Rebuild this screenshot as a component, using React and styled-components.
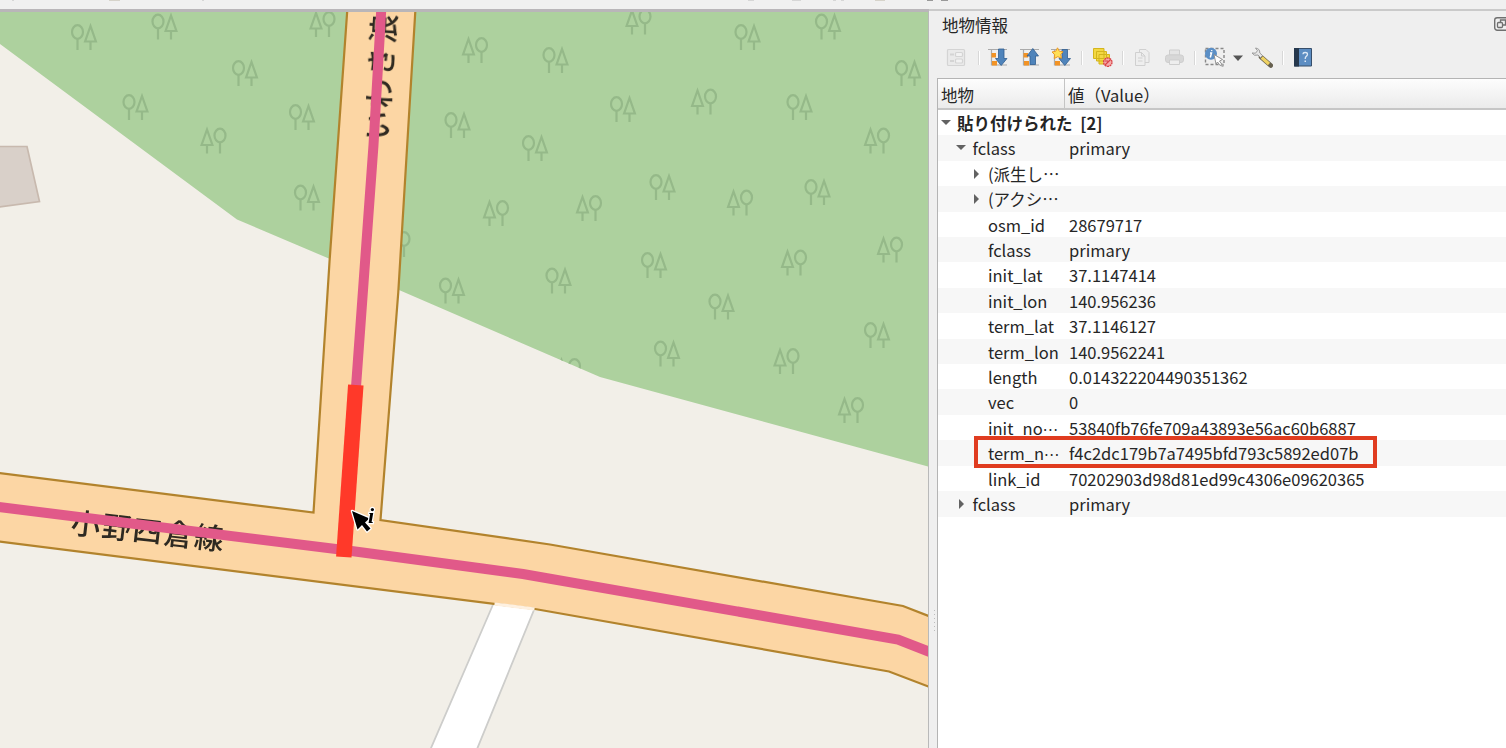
import React from "react";
import styled, { createGlobalStyle } from "styled-components";

const GlobalStyle = createGlobalStyle`
  *, *::before, *::after { box-sizing: border-box; }
  body {
    margin: 0;
    background: #efefef;
    font-family: "Noto Sans CJK JP", "Noto Sans", sans-serif;
    font-size: 16.5px;
    color: #262626;
    overflow: hidden;
  }
`;

const Window = styled.div`
  display: flex;
  flex-direction: column;
  width: 1506px;
  height: 748px;
  overflow: hidden;
`;

const TopStrip = styled.header`
  height: 9px;
  flex: none;
  background: #f0f0f0;
  svg { display: block; }
`;

const Workspace = styled.main`
  flex: 1;
  display: flex;
  min-height: 0;
`;

const MapView = styled.section`
  width: 929px;
  flex: none;
  border-top: 3px solid #b9b6b9;
  border-right: 1px solid #b9b9b9;
  background: #f2efe9;
  svg { display: block; }
`;

const Splitter = styled.div`
  width: 8px;
  flex: none;
  display: flex;
  flex-direction: column;
  align-items: center;
  gap: 3px;
  padding: 599px 0 0 2px;
  border-top: 2px solid #cacaca;
  background: #efefef;
`;

const Grip = styled.i`
  width: 1px;
  height: 1px;
  background: #bdbdbd;
`;

const Panel = styled.aside`
  flex: 1;
  min-width: 0;
  display: flex;
  flex-direction: column;
  border-top: 2px solid #cacaca;
  background: #efefef;
`;

const TitleBar = styled.div`
  height: 30px;
  display: flex;
  justify-content: space-between;
  padding: 0 0 0 5px;
  line-height: 29px;
  overflow: hidden;
`;

const FloatButton = styled.span`
  width: 12px;
  height: 22px;
  margin-top: 4px;
  overflow: hidden;
  svg { display: block; }
`;

const ToolBar = styled.div`
  height: 37px;
  display: flex;
  align-items: flex-start;
  padding: 6px 0 0 9px;
`;

const Tool = styled.span`
  width: 22px;
  height: 22px;
  flex: none;
  margin-left: ${(p) => p.$gap || 0}px;
  opacity: ${(p) => (p.$disabled ? 0.6 : 1)};
  svg { display: block; }
`;

const Divider = styled.i`
  width: 2px;
  height: 14px;
  margin: 4px 0 0 ${(p) => p.$gap}px;
  border-left: 1px solid #d8d8d8;
  border-right: 1px solid #fff;
`;

const Tree = styled.div`
  flex: 1;
  background: #fff;
  border-left: 1px solid #b4b4b4;
`;

const TreeHeader = styled.div`
  display: flex;
  height: 32px;
  border-top: 1px solid #b4b4b4;
  border-bottom: 2px solid #c6c6c6;
  background: linear-gradient(#fdfdfd, #ebebeb);
  line-height: 33px;
  overflow: hidden;
`;

const HeaderCell = styled.div`
  width: ${(p) => p.$width};
  padding-left: 3px;
  border-right: ${(p) => (p.$last ? "none" : "1px solid #c4c4c4")};
  white-space: nowrap;
`;

const Row = styled.div`
  position: relative;
  z-index: ${(p) => (p.$raised ? 1 : 0)};
  display: flex;
  height: 25.42px;
  line-height: 27px;
  background: ${(p) => (p.$odd ? "#f7f7f7" : "#fff")};
  font-weight: ${(p) => (p.$bold ? 700 : 400)};
  word-spacing: ${(p) => (p.$bold ? 4 : 0)}px;
  white-space: nowrap;
`;

const Name = styled.div`
  width: ${(p) => (p.$wide ? "auto" : "127px")};
  flex: none;
  display: flex;
  padding-left: ${(p) => 2 + p.$level * 15.5}px;
`;

const Ellipsis = styled.span`
  font-size: 14px;
  line-height: 0;
  vertical-align: 4.5px;
`;

const Arrow = styled.span`
  width: 17px;
  flex: none;
  display: flex;
  padding-top: ${(p) => (p.$open ? 9 : 7)}px;
  margin-left: ${(p) => (p.$nested ? -1 : 0)}px;
  margin-right: ${(p) => (p.$nested ? 1 : 0)}px;
  svg { display: block; }
`;

const Value = styled.div`
  padding-left: 4px;
`;

const Highlight = styled.span`
  position: absolute;
  left: 36px;
  top: -4px;
  width: 403px;
  height: 32px;
  border: 4px solid #e03c20;
`;

const rows = [
  { name: "貼り付けられた [2]", level: 0, state: "open", bold: true },
  { name: "fclass", value: "primary", level: 1, state: "open" },
  { name: "(派生し…", level: 2, state: "closed" },
  { name: "(アクシ…", level: 2, state: "closed" },
  { name: "osm_id", value: "28679717", level: 2 },
  { name: "fclass", value: "primary", level: 2 },
  { name: "init_lat", value: "37.1147414", level: 2 },
  { name: "init_lon", value: "140.956236", level: 2 },
  { name: "term_lat", value: "37.1146127", level: 2 },
  { name: "term_lon", value: "140.9562241", level: 2 },
  { name: "length", value: "0.014322204490351362", level: 2 },
  { name: "vec", value: "0", level: 2 },
  { name: "init_no", clipped: true, value: "53840fb76fe709a43893e56ac60b6887", level: 2 },
  { name: "term_n", clipped: true, value: "f4c2dc179b7a7495bfd793c5892ed07b", level: 2, marked: true },
  { name: "link_id", value: "70202903d98d81ed99c4306e09620365", level: 2 },
  { name: "fclass", value: "primary", level: 1, state: "closed" },
];

const roundFirst = [
  [84, 37], [164.5, 26.5], [245, 73], [135.5, 107], [302, 117], [307, 197.5],
  [457.5, 125], [555.5, 60], [535, 148], [623, 109], [662.5, 187], [452, 290.5],
  [558.5, 280.5], [654, 265], [721.5, 306.5], [747.5, 37], [828, 26.5],
  [908, 73], [799.5, 107], [817.5, 192], [667, 353.5], [877, 335],
];

const coneFirst = [
  [322.5, 24], [213.5, 140.5], [475, 50], [638.5, 21.5], [704, 101.5],
  [496, 213], [589, 208], [740, 202.5], [877, 140.5], [890, 249.5],
  [794, 262.5], [786.5, 361], [851, 410], [397.5, 244], [568, 371],
];

function TreePair({ x, y, flip }) {
  const round = flip ? 6.5 : -6.5;
  return (
    <g transform={`translate(${x} ${y})`}>
      <g transform={`translate(${round} 0)`}>
        <ellipse cy="-5" rx="5.5" ry="6.8" />
        <path d="M0 2V13" />
      </g>
      <path transform={`translate(${-round} 0)`} d="M0-11L-5.4 4.5H5.4ZM0 4.5V13" />
    </g>
  );
}

function MapCanvas() {
  const mainRoad = "M-5 472.5L313.500 512.500L329.500 262L348 0H416L398.300 292L380.500 520L550 544.500L903 606L935 618.500V689L889 671.500L535 609L-5 541Z";
  return (
    <svg width="928" height="736" viewBox="0 12 928 736">
      <defs>
        <clipPath id="wood">
          <path d="M0 0H928V466.500L600 377L399 290L330 259L237 219.500L0 44Z" />
        </clipPath>
        <filter id="labelSoft"><feGaussianBlur stdDeviation="0.6" /></filter>
      </defs>
      <rect y="12" width="928" height="736" fill="#f2efe8" />
      <g clipPath="url(#wood)">
        <rect width="928" height="480" fill="#add19e" />
        <g fill="none" stroke="#95b989" strokeWidth="2.200">
          {roundFirst.map(([x, y]) => <TreePair key={`${x}-${y}`} x={x} y={y} />)}
          {coneFirst.map(([x, y]) => <TreePair key={`${x}-${y}`} x={x} y={y} flip />)}
        </g>
      </g>
      <path d="M-5 146.500H27L39.500 201.500L-5 207.500Z" fill="#d9d0c9" stroke="#c8b9ae" strokeWidth="1.700" />
      <path d="M495 600L428 755H474.600L536 605Z" fill="#fff" stroke="#cdcdcb" strokeWidth="1.800" />
      <path d={mainRoad} fill="#fcd6a4" stroke="#b2832c" strokeWidth="2.200" strokeLinejoin="miter" />
      <path d="M494.500 604L534.500 609" stroke="#fef1e1" strokeWidth="3.200" />
      <g fill="#2e2920" fontFamily='"Noto Sans CJK JP", sans-serif' fontWeight="500" filter="url(#labelSoft)">
        <text transform="translate(70 533) rotate(6.500)" fontSize="29.500" letterSpacing="1.500">小野四倉線</text>
        <text transform="translate(387.500 141) rotate(-86.500)" fontSize="29.500" letterSpacing="2.800">いわき浪</text>
      </g>
      <path d="M381.800 0L373.500 145L356 387" fill="none" stroke="#e15989" strokeWidth="10" />
      <path d="M-5 506.500L344 550L523 574L898 639.500L935 654" fill="none" stroke="#e15989" strokeWidth="10" />
      <path d="M355.800 385L343.800 557" stroke="#ff3929" strokeWidth="15.500" />
      <path d="M352 511L357.500 529.500L362 525L367 531.500L370.500 528.500L365 522.500L369.500 518.500Z" fill="#000" stroke="#fff" strokeWidth="2.600" strokeLinejoin="round" paintOrder="stroke" />
      <text x="368" y="523" fontFamily='"Liberation Serif", serif' fontSize="22" fontWeight="700" fontStyle="italic" fill="#000" stroke="#fff" strokeWidth="2.400" paintOrder="stroke">i</text>
    </svg>
  );
}

const TreeLines = () => (
  <path d="M1 2.500H20M4.500 2V18.500M4.500 8H8M4.500 18H20" fill="none" stroke="#aaa" strokeWidth="1.200" />
);

const icons = {
  form: (
    <g fill="none" stroke="#c3c3c3" strokeWidth="1.200">
      <rect x="1.500" y="2.500" width="17" height="16" rx="1" fill="#e8e8e8" />
      <path d="M4 7.500H8M4 14H8" strokeWidth="2" />
      <rect x="9.500" y="5.500" width="7" height="4" rx="1" fill="#f5f5f5" />
      <rect x="9.500" y="12" width="7" height="4" rx="1" fill="#f5f5f5" />
    </g>
  ),
  expand: (
    <>
      <TreeLines />
      <path d="M4.500 6H9V10.500H4.500ZM5 14H10V18.500H5Z" fill="#f29325" />
      <path d="M11.500 2H17V11.500H20L14.200 18.500L8.500 11.500H11.500Z" fill="#4f84bb" stroke="#315e91" strokeWidth=".8" />
    </>
  ),
  collapse: (
    <>
      <TreeLines />
      <path d="M4.500 6H9V10.500H4.500ZM5 14H10V18.500H5Z" fill="#f29325" />
      <path d="M11 17.500H16.500V9H19.500L13.800 1.500L8 9H11Z" fill="#4f84bb" stroke="#315e91" strokeWidth=".8" />
    </>
  ),
  expandNew: (
    <>
      <TreeLines />
      <path d="M5 14H10V18.500H5Z" fill="#f29325" />
      <path d="M12 2.500H17.500V11.500H20.500L14.800 18.500L9 11.500H12Z" fill="#4f84bb" stroke="#315e91" strokeWidth=".8" />
      <path d="M7.500 .8L9.300 4.200L13 4.800L10.700 7.500L11.500 11.300L7.800 9.700L4.200 11.500L4.700 7.700L2 5L5.700 4.300Z" fill="#ffdf57" stroke="#e99725" />
    </>
  ),
  clear: (
    <>
      <path d="M1.500 1.500H12V11.500H1.500ZM4.500 4.500H14.500V14H4.500ZM7 7.500H17.500V17H7Z" fill="#f3d842" stroke="#d4b51d" />
      <circle cx="15.800" cy="15.200" r="4.200" fill="#f5aaaa" stroke="#d94347" strokeWidth="1.300" strokeDasharray="2 .6" />
      <path d="M13 18L18.600 12.500M13 14H16" stroke="#d94347" strokeWidth="1.200" />
    </>
  ),
  copy: (
    <g fill="#eee" stroke="#bcbcbc">
      <path d="M7.500 2.500H14L17 5.500V15.500H7.500Z" />
      <path d="M3.500 5.500H9.500L13 9V18.500H3.500ZM9.500 5.500V9H13M6 11H10.500M6 14H10.500" />
    </g>
  ),
  print: (
    <g stroke="#b9b9b9">
      <path d="M5.500 3H15.500V8H5.500Z" fill="#ddd" />
      <rect x="1.500" y="8" width="18" height="7.500" rx="2.500" fill="#c8c8c8" />
      <path d="M5.500 13H15.500V17.500H5.500Z" fill="#eee" />
    </g>
  ),
  identify: (
    <>
      <rect x="1.500" y="1.500" width="18.500" height="16" fill="none" stroke="#888" strokeWidth="1.400" strokeDasharray="3 2" />
      <circle cx="7" cy="6.800" r="6" fill="#5b8fc6" />
      <path d="M6 6H7.500L6.300 10.500M7.800 3.200L7.600 4.200" fill="none" stroke="#fff" strokeWidth="1.500" />
      <path d="M10 7.500L18.500 12.500L15.500 14L18 17.500L16 18.500L13.500 15L12 17Z" fill="#fff" stroke="#888" strokeWidth=".9" />
      <circle cx="18.500" cy="18.500" r="1.400" fill="#aaa" />
    </>
  ),
  wrench: (
    <>
      <path d="M10 10L19.800 18.500" stroke="#66604f" strokeWidth="4.600" strokeLinecap="round" />
      <path d="M10.700 10.500L18 17" stroke="#efd261" strokeWidth="3.200" />
      <path d="M1 6Q3 9.500 7 8L9.500 10.500L11.500 8.500L8.800 6Q9 1.500 4.500 1L6.500 3.700L4.500 6.200Z" fill="#e6e6e6" stroke="#9b9b9b" />
    </>
  ),
  help: (
    <>
      <path d="M1.500 1.500H18.500V19H1.500Z" fill="#5c8dc2" stroke="#374f6b" />
      <path d="M1 1H6V19.500H1Z" fill="#26384d" />
      <path d="M10 7.300Q10 5.500 12.200 5.500Q14.500 5.500 14.500 7.300Q14.500 8.500 13.200 9.400Q12.200 10 12.200 12" fill="none" stroke="#dce8f5" strokeWidth="1.300" />
      <rect x="11.500" y="13.500" width="1.500" height="1.500" fill="#dce8f5" />
    </>
  ),
};

const Icon = ({ name, gap, disabled }) => (
  <Tool $gap={gap} $disabled={disabled}>
    <svg width="22" height="22" viewBox="0 0 22 22">{icons[name]}</svg>
  </Tool>
);

function TreeRow({ row, index }) {
  const open = row.state === "open";
  return (
    <Row $odd={index % 2 === 1} $bold={row.bold} $raised={row.marked}>
      <Name $level={row.level} $wide={row.bold}>
        <Arrow $open={open} $nested={row.level > 0}>
          {row.state && (
            <svg width="12" height="12" viewBox="0 0 12 12">
              <path d={open ? "M1 1H11L6 6Z" : "M4 1L9 6L4 11Z"} fill="#626262" />
            </svg>
          )}
        </Arrow>
        <span>
          {row.name}
          {row.clipped && <Ellipsis>…</Ellipsis>}
        </span>
      </Name>
      {row.value && <Value>{row.value}</Value>}
      {row.marked && <Highlight />}
    </Row>
  );
}

export default function App() {
  return (
    <Window>
      <GlobalStyle />
      <TopStrip>
        <svg width="1506" height="9">
          <path d="M12 0H14M748 0H754M792 0H801M833 0H836M841 0H844M202 0H204" stroke="#bbb" />
          <path d="M109 0H120M875 0H885" stroke="#d6d3ca" strokeWidth="2" />
          <path d="M927 0H933M941 0H948" stroke="#999" strokeWidth="2" />
        </svg>
      </TopStrip>
      <Workspace>
        <MapView><MapCanvas /></MapView>
        <Splitter>
          <Grip /><Grip /><Grip /><Grip /><Grip /><Grip />
        </Splitter>
        <Panel>
          <TitleBar>
            地物情報
            <FloatButton>
              <svg width="22" height="18" fill="none" stroke="#707070">
                <rect x=".7" y="2.700" width="16" height="12.500" rx="2.500" strokeWidth="1.400" />
                <rect x="3.500" y="7.500" width="5" height="5" rx="1" strokeWidth="1.300" />
                <path d="M6.500 7V5H11.500V10H9" strokeWidth="1.300" />
              </svg>
            </FloatButton>
          </TitleBar>
          <ToolBar>
            <Icon name="form" disabled />
            <Divider $gap={10} />
            <Icon name="expand" gap={7} />
            <Icon name="collapse" gap={10} />
            <Icon name="expandNew" gap={9} />
            <Divider $gap={9} />
            <Icon name="clear" gap={9} />
            <Divider $gap={8} />
            <Icon name="copy" gap={8} disabled />
            <Icon name="print" gap={10} disabled />
            <Divider $gap={8} />
            <Icon name="identify" gap={8} />
            <Tool $gap={5}>
              <svg width="22" height="22"><path d="M2 8.500H12L7 14Z" fill="#555" /></svg>
            </Tool>
            <Icon name="wrench" gap={-2} />
            <Divider $gap={9} />
            <Icon name="help" gap={9} />
          </ToolBar>
          <Tree>
            <TreeHeader>
              <HeaderCell $width="127px">地物</HeaderCell>
              <HeaderCell $width="300px" $last>値（Value）</HeaderCell>
            </TreeHeader>
            {rows.map((row, i) => <TreeRow key={i} row={row} index={i} />)}
          </Tree>
        </Panel>
      </Workspace>
    </Window>
  );
}
